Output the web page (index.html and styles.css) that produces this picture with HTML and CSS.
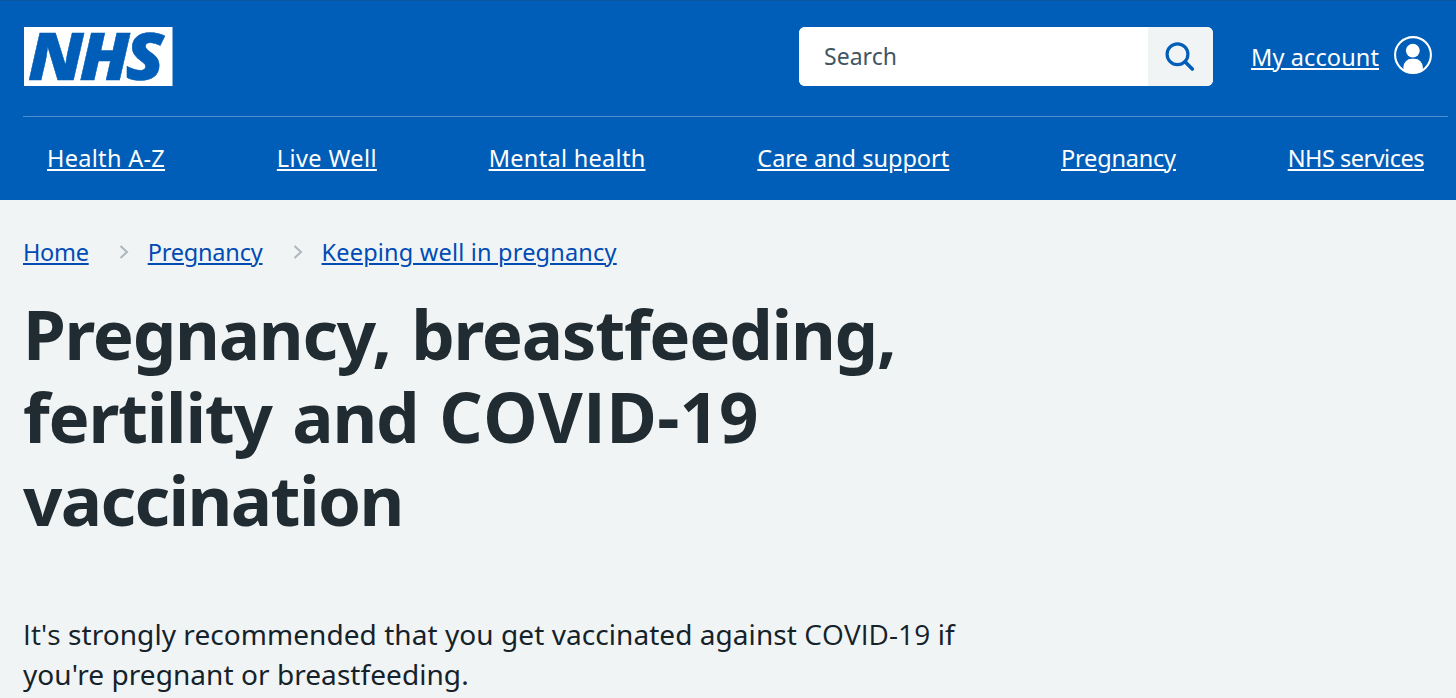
FILE: index.html
```html
<!DOCTYPE html>
<html lang="en">
<head>
  <meta charset="UTF-8">
  <meta name="viewport" content="width=device-width, initial-scale=1.0">
  <title>Pregnancy, breastfeeding, fertility and COVID-19 vaccination - NHS</title>
  <link rel="stylesheet" href="styles.css">
</head>
<body>
  <header class="header">
    <div class="header-top">
      <a class="logo" href="#">
        <svg width="149" height="59" viewBox="0 0 149 59">
          <rect width="148.5" height="59" fill="#fff"/>
          <text class="logo-text" transform="translate(4 53.3) scale(1.07 1)">NHS</text>
        </svg>
      </a>
      <form class="search">
        <input class="search-input" type="text" placeholder="Search">
        <button class="search-button" type="button" aria-label="Search">
          <svg width="30" height="30" viewBox="0 0 30 30" fill="none" stroke="#005eb8" stroke-linecap="round">
            <circle cx="12.5" cy="12.2" r="10.4" stroke-width="3.2"/>
            <path d="M20 19.7 L27.3 27" stroke-width="3.6"/>
          </svg>
        </button>
      </form>
      <a class="account" href="#">
        <span class="account-text">My account</span>
        <svg width="38" height="38" viewBox="0 0 38 38">
          <circle cx="19" cy="19" r="17.9" fill="none" stroke="#fff" stroke-width="2.1"/>
          <circle cx="18.8" cy="14.6" r="6.9" fill="#fff"/>
          <path d="M9.4 34.5 V31 A8.3 8.3 0 0 1 17.7 22.7 H20.5 A8.3 8.3 0 0 1 28.8 31 V34.5 Q19 39.5 9.4 34.5 Z" fill="#fff"/>
        </svg>
      </a>
    </div>
    <nav class="nav">
      <a class="nav-link health" href="#">Health A-Z</a>
      <a class="nav-link live" href="#">Live Well</a>
      <a class="nav-link mental" href="#">Mental health</a>
      <a class="nav-link care" href="#">Care and support</a>
      <a class="nav-link pregnancy" href="#">Pregnancy</a>
      <a class="nav-link services" href="#">NHS services</a>
    </nav>
  </header>

  <main class="content">
    <div class="breadcrumb">
      <a class="crumb home" href="#">Home</a>
      <svg class="chevron" width="10" height="14" viewBox="0 0 10 14"><path d="M1.5 1 L8 7 L1.5 13"/></svg>
      <a class="crumb pregnancy" href="#">Pregnancy</a>
      <svg class="chevron" width="10" height="14" viewBox="0 0 10 14"><path d="M1.5 1 L8 7 L1.5 13"/></svg>
      <a class="crumb keeping" href="#">Keeping well in pregnancy</a>
    </div>

    <h1 class="title">
      <span class="title-line">Pregnancy, breastfeeding,</span>
      <span class="title-line">fertility and <span class="caps">COVID-19</span></span>
      <span class="title-line third">vaccination</span>
    </h1>

    <p class="intro"><span class="caps">It's</span> strongly recommended that you get vaccinated against <span class="caps">COVID-19</span> if<br>you're pregnant or breastfeeding.</p>
  </main>
</body>
</html>
```
FILE: styles.css
```css
* {
  box-sizing: border-box;
}

body {
  margin: 0;
  height: 698px;
  overflow: hidden;
  font-family: "Noto Sans", "Open Sans", sans-serif;
  background-color: #f0f4f5;
  color: #212b32;
}

.header {
  height: 200px;
  background-color: #005eb8;
  border-top: 1px solid #0b559c;
  padding: 0 8px 0 23px;
}

.header-top {
  display: flex;
  align-items: flex-start;
  height: 116px;
  padding: 26px 16px 0 1px;
  border-bottom: 1px solid #4d8ecd;
}

.logo {
  display: block;
  height: 59px;
}

.logo svg {
  display: block;
}

.logo-text {
  font-family: "Open Sans", "Noto Sans", sans-serif;
  font-size: 66px;
  font-weight: 800;
  font-style: italic;
  letter-spacing: -4px;
  fill: #005eb8;
  stroke: #005eb8;
  stroke-width: 0.5px;
}

.search {
  display: flex;
  width: 414px;
  height: 59px;
  margin-left: auto;
  border-radius: 6px;
  overflow: hidden;
  background-color: #fff;
}

.search-input {
  width: 349px;
  border: none;
  padding: 0 25px 1px;
  font-family: inherit;
  font-size: 23px;
  color: #425563;
}

.search-input::placeholder {
  color: #425563;
}

.search-button {
  display: flex;
  align-items: center;
  justify-content: center;
  width: 65px;
  padding: 0 2px 0 0;
  border: none;
  background-color: #f0f4f5;
}

.account {
  display: flex;
  align-items: center;
  gap: 15px;
  height: 59px;
  margin-left: 38px;
  font-size: 23.5px;
  letter-spacing: 0.1px;
  color: #fff;
}

.account svg {
  margin-top: -3px;
}

.nav {
  display: flex;
  justify-content: space-between;
  align-items: center;
  height: 81px;
  padding: 0 24px;
}

.nav-link {
  font-size: 23.5px;
  color: #fff;
}

.nav-link,
.account-text,
.crumb {
  white-space: nowrap;
  text-decoration: underline;
  text-decoration-thickness: 1.5px;
  text-underline-offset: 2px;
}

.health {
  letter-spacing: 0.3px;
}

.live {
  letter-spacing: 0.4px;
}

.mental {
  letter-spacing: 0.3px;
}

.pregnancy {
  letter-spacing: -0.2px;
}

.services {
  letter-spacing: -0.5px;
}

.content {
  padding: 35px 23px 0;
}

.breadcrumb {
  display: flex;
  align-items: center;
  height: 34px;
  font-size: 23.5px;
}

.crumb {
  color: #004bb4;
}

.home {
  letter-spacing: -0.3px;
}

.keeping {
  letter-spacing: 0.2px;
}

.chevron {
  margin: 0 19px 0 30px;
  fill: none;
  stroke: #aeb7bd;
  stroke-width: 2;
}

.title {
  margin: 23px 0 0;
  font-size: 69px;
  line-height: 83.2px;
  font-weight: 700;
}

.title-line {
  display: block;
  white-space: nowrap;
  letter-spacing: -1.25px;
  word-spacing: 4px;
}

.third {
  letter-spacing: -1.6px;
}

/* plain capital I */
.caps {
  font-family: "Open Sans", "Noto Sans", sans-serif;
  letter-spacing: 0.1px;
}

.intro {
  margin: 72px 0 0;
  font-size: 28px;
  line-height: 40px;
  letter-spacing: 0.06px;
  color: #15222a;
  white-space: nowrap;
}
```
